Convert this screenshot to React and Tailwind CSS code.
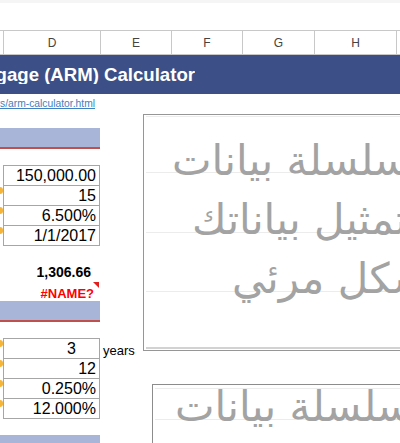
const inputs1 = [
  { v: "150,000.00", m: false },
  { v: "15", m: true },
  { v: "6.500%", m: true },
  { v: "1/1/2017", m: true },
];
const inputs2 = [
  { v: "3", m: true, pr: "pr-[23px]", label: "years" },
  { v: "12", m: true },
  { v: "0.250%", m: true },
  { v: "12.000%", m: true },
];

function InputBox({ rows }) {
  return (
    <div className="flex">
      <div className="w-[3px] shrink-0 flex flex-col pt-[1px]">
        {rows.map((r, i) => (
          <div key={i} className="h-[20px] pt-[1px]">
            {r.m && <div className="h-[7px] w-[3px] rounded-r-full bg-[#f4b53a]" />}
          </div>
        ))}
      </div>
      <div className="w-[97px] shrink-0 border border-[#a6a6a6]">
        {rows.map((r, i) => (
          <div
            key={i}
            className={
              "h-[19px] flex items-center justify-end text-[16px] leading-none text-black " +
              (r.pr ? r.pr : "pr-[3px]") +
              (i > 0 ? " box-content border-t border-[#a6a6a6]" : "")
            }
          >
            {r.v}
          </div>
        ))}
      </div>
      <div className="flex flex-col pt-[1px]">
        {rows.map((r, i) => (
          <div key={i} className="h-[20px] flex items-end pl-[3px] pb-[2px] text-[13px] leading-none text-black">
            {r.label || ""}
          </div>
        ))}
      </div>
    </div>
  );
}

function Band() {
  return (
    <div className="w-[100px]">
      <div className="h-[19px] bg-[#a9b4d9]" />
      <div className="h-[2px] bg-[#c0504d]" />
    </div>
  );
}

function ChartGrid({ lines, axis }) {
  return (
    <svg className="absolute inset-0" width="400" height="240">
      {lines.map((y, i) => (
        <line key={i} x1="2" x2="400" y1={y + 0.5} y2={y + 0.5} stroke="#ececec" strokeWidth="1" />
      ))}
      {axis && <rect x="2" y={axis} width="400" height="2" fill="#d2d2d2" />}
    </svg>
  );
}

const arabic = "font-['DejaVu_Sans',sans-serif] text-[42px] text-[#a3a3a3] whitespace-nowrap text-left";

export default function App() {
  return (
    <div className="relative w-[400px] h-[443px] overflow-hidden bg-white font-['Liberation_Sans',Arial,sans-serif]">
      <div className="h-[3px] bg-[#f5f5f5]" />
      <div className="h-[27px]" />
      {/* column headers */}
      <div className="flex h-[25px] border-y border-[#c8c8c8] text-[12px] text-[#444]">
        <div className="w-[4px] shrink-0 border-r border-[#c8c8c8]" />
        <div className="w-[97px] shrink-0 border-r border-[#c8c8c8] flex items-center justify-center">D</div>
        <div className="w-[71px] shrink-0 border-r border-[#c8c8c8] flex items-center justify-center">E</div>
        <div className="w-[71px] shrink-0 border-r border-[#c8c8c8] flex items-center justify-center">F</div>
        <div className="w-[72px] shrink-0 border-r border-[#c8c8c8] flex items-center justify-center">G</div>
        <div className="w-[82px] shrink-0 border-r border-[#c8c8c8] flex items-center justify-center">H</div>
        <div className="flex-1" />
      </div>
      {/* title bar */}
      <div className="h-[39px] bg-[#3c4f86] flex items-center">
        <div className="w-[195px] overflow-hidden flex justify-end whitespace-nowrap text-white font-bold text-[18.6px] leading-none pt-[1px]">
          <span>Adjustable-Rate Mortgage (ARM) Calculator</span>
        </div>
      </div>
      {/* left column */}
      <div className="w-[100px] flex flex-col">
        <div className="h-[20px] flex items-center pt-[1px]">
          <div className="w-[95px] overflow-hidden flex justify-end whitespace-nowrap">
            <span className="text-[10.3px] leading-none text-[#3f80c0] underline">
              https://www.vertex42.com/Calculators/arm-calculator.html
            </span>
          </div>
        </div>
        <div className="h-[14px]" />
        <Band />
        <div className="h-[16px]" />
        <InputBox rows={inputs1} />
        <div className="h-[15px]" />
        <div className="h-[21px] flex items-center justify-end pr-[9px] text-[14px] font-bold leading-none text-black">
          1,306.66
        </div>
        <div className="relative h-[19px] flex items-center justify-end pt-[3px] pr-[6px] text-[13px] font-bold leading-none text-[#ff0000]">
          #NAME?
          <div className="absolute top-0 right-[1px] w-0 h-0 border-t-[6px] border-l-[6px] border-t-[#e02020] border-l-transparent" />
        </div>
        <Band />
        <div className="h-[16px]" />
        <InputBox rows={inputs2} />
        <div className="h-[16px]" />
        <div className="h-[19px] w-[100px] bg-[#a9b4d9]" />
      </div>

      {/* chart 1 (floating object) */}
      <div className="absolute left-[143px] top-[114px] w-[400px] h-[237px] border border-[#969696] bg-white overflow-hidden">
        <ChartGrid lines={[1, 57, 117, 176]} axis={232} />
        <div className="relative pt-[16px] leading-[59px]" dir="rtl">
          <div className={arabic + " pl-[28px]"}>سلسلة بيانات</div>
          <div className={arabic + " pl-[48px]"}>تمثيل بياناتك</div>
          <div className={arabic + " pl-[88px]"}>بشكل مرئي</div>
        </div>
      </div>

      {/* chart 2 (floating object) */}
      <div className="absolute left-[152px] top-[384px] w-[400px] h-[200px] border border-[#8c8c8c] bg-white overflow-hidden">
        <ChartGrid lines={[3, 34]} />
        <div className="relative leading-[43px]" dir="rtl">
          <div className={arabic + " pl-[22px]"}>سلسلة بيانات</div>
        </div>
      </div>
    </div>
  );
}
